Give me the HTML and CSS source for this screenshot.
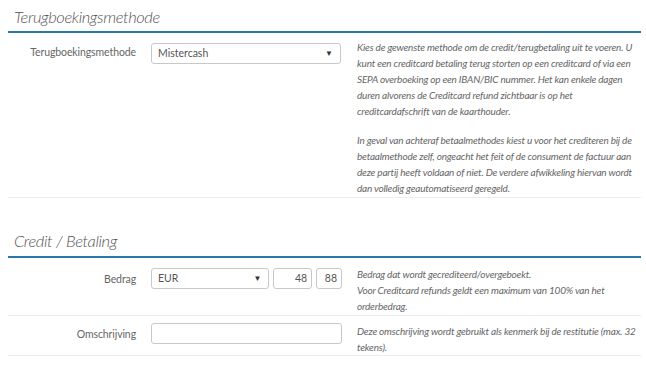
FILE: index.html
```html
<!DOCTYPE html>
<html>
<head>
<meta charset="utf-8">
<link rel="stylesheet" href="styles.css">
</head>
<body>
<div class="page">
  <section class="section first">
    <h2 class="section-title">Terugboekingsmethode</h2>
    <div class="row row-tall">
      <div class="label">Terugboekingsmethode</div>
      <div class="control control-select">
        <div class="select select-wide"><span>Mistercash</span><span class="arrow">▼</span></div>
      </div>
      <div class="help">
        <p>Kies de gewenste methode om de credit/terugbetaling uit te voeren. U<br>kunt een creditcard betaling terug storten op een creditcard of via een<br>SEPA overboeking op een IBAN/BIC nummer. Het kan enkele dagen<br>duren alvorens de Creditcard refund zichtbaar is op het<br>creditcardafschrift van de kaarthouder.</p>
        <p>In geval van achteraf betaalmethodes kiest u voor het crediteren bij de<br>betaalmethode zelf, ongeacht het feit of de consument de factuur aan<br>deze partij heeft voldaan of niet. De verdere afwikkeling hiervan wordt<br>dan volledig geautomatiseerd geregeld.</p>
      </div>
    </div>
  </section>
  <section class="section second">
    <h2 class="section-title">Credit / Betaling</h2>
    <div class="row">
      <div class="label">Bedrag</div>
      <div class="control control-select amount">
        <div class="select select-cur"><span>EUR</span><span class="arrow">▼</span></div>
        <div class="input num n1">48</div>
        <div class="input num n2">88</div>
      </div>
      <div class="help">
        <p>Bedrag dat wordt gecrediteerd/overgeboekt.<br>Voor Creditcard refunds geldt een maximum van 100% van het<br>orderbedrag.</p>
      </div>
    </div>
    <div class="row row-short">
      <div class="label label-input">Omschrijving</div>
      <div class="control control-input">
        <div class="input text"></div>
      </div>
      <div class="help">
        <p>Deze omschrijving wordt gebruikt als kenmerk bij de restitutie (max. 32<br>tekens).</p>
      </div>
    </div>
  </section>
</div>
</body>
</html>
```
FILE: styles.css
```css
html, body {
  margin: 0;
  padding: 0;
  background: #fff;
}
body {
  font-family: Lato, "Open Sans", sans-serif;
  color: #555;
}
.page {
  width: 633px;
  margin-left: 8px;
}
.section.first {
  padding-top: 5px;
}
.section.second {
  margin-top: 31px;
}
.section-title {
  margin: 0;
  padding: 0 0 2px 6px;
  font-size: 16.5px;
  letter-spacing: -0.4px;
  line-height: 24px;
  font-weight: 300;
  font-style: italic;
  color: #555;
  border-bottom: 2px solid #2878ac;
}
.second .section-title {
  padding-bottom: 3px;
}
.row {
  display: grid;
  grid-template-columns: 128px 191px 1fr;
  column-gap: 15px;
  padding: 8px 0 1px;
  border-bottom: 1px solid #ececec;
}
.row-tall {
  padding-top: 6px;
}
.row-short {
  padding-top: 7px;
  padding-bottom: 0;
}
.label {
  text-align: right;
  font-size: 10.5px;
  letter-spacing: -0.1px;
  line-height: 16px;
  padding-top: 5px;
  color: #666;
}
.label-input {
  padding-top: 3px;
}
.control-select {
  padding-top: 2px;
}
.control-input {
  padding-top: 0;
}
.row-tall .control-select {
  padding-top: 4px;
}
.amount {
  display: flex;
  gap: 4px;
  align-items: flex-start;
}
.select, .input {
  box-sizing: border-box;
  height: 21px;
  border: 1px solid #c8c8c8;
  border-radius: 3px;
  background: #fff;
  font-size: 10.5px;
  line-height: 19px;
  color: #555;
}
.select {
  display: flex;
  justify-content: space-between;
  padding: 0 7px 0 6px;
}
.select-wide {
  width: 190px;
}
.select-cur {
  width: 119px;
}
.arrow {
  font-size: 8px;
  color: #333;
}
.num {
  text-align: right;
  padding-right: 4px;
}
.n1 {
  width: 39px;
}
.n2 {
  width: 26px;
}
.input.text {
  width: 191px;
}
.help {
  font-size: 10px;
  letter-spacing: -0.2px;
  line-height: 16px;
  font-style: italic;
  color: #666;
  white-space: nowrap;
}
.help p {
  margin: 0;
}
.help p + p {
  margin-top: 13px;
}
```
